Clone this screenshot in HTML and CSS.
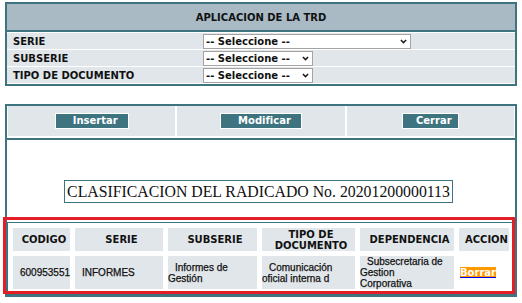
FILE: index.html
```html
<!DOCTYPE html>
<html lang="es">
<head>
<meta charset="utf-8">
<title>Aplicacion de la TRD</title>
<link rel="stylesheet" href="styles.css">
</head>
<body>
<div class="page">
  <section class="panel trd">
    <div class="trd-title">APLICACION DE LA TRD</div>
    <div class="trd-rows">
      <div class="trd-row">
        <span class="trd-label">SERIE</span>
        <span class="sel sel-wide"><select><option>-- Seleccione --</option></select><svg class="chev" viewBox="0 0 8 5"><path d="M1 0.8L4 3.8L7 0.8"/></svg></span>
      </div>
      <div class="trd-row">
        <span class="trd-label">SUBSERIE</span>
        <span class="sel sel-narrow"><select><option>-- Seleccione --</option></select><svg class="chev" viewBox="0 0 8 5"><path d="M1 0.8L4 3.8L7 0.8"/></svg></span>
      </div>
      <div class="trd-row">
        <span class="trd-label">TIPO DE DOCUMENTO</span>
        <span class="sel sel-narrow"><select><option>-- Seleccione --</option></select><svg class="chev" viewBox="0 0 8 5"><path d="M1 0.8L4 3.8L7 0.8"/></svg></span>
      </div>
    </div>
  </section>

  <section class="panel main">
    <div class="actions">
      <div class="action-cell"><button class="btn">Insertar</button></div>
      <div class="action-cell"><button class="btn">Modificar</button></div>
      <div class="action-cell"><button class="btn btn-close">Cerrar</button></div>
    </div>
    <div class="radicado-wrap">
      <div class="radicado">CLASIFICACION DEL RADICADO No. 20201200000113</div>
    </div>
    <div class="results-wrap">
      <table class="results">
        <colgroup>
          <col class="c-cod"><col class="c-serie"><col class="c-sub"><col class="c-tipo"><col class="c-dep"><col class="c-acc">
        </colgroup>
        <tr>
          <th>CODIGO</th><th>SERIE</th><th>SUBSERIE</th><th>TIPO DE DOCUMENTO</th><th>DEPENDENCIA</th><th>ACCION</th>
        </tr>
        <tr>
          <td>600953551</td>
          <td>INFORMES</td>
          <td>Informes de Gestión</td>
          <td>Comunicación oficial interna d</td>
          <td>Subsecretaria de Gestion<br>Corporativa</td>
          <td class="action"><a class="del" href="#"><span>Borrar</span></a></td>
        </tr>
      </table>
    </div>
  </section>
</div>
</body>
</html>
```
FILE: styles.css
```css
* { box-sizing: border-box; }
body {
  margin: 0;
  padding: 2px 0 0 5px;
  background: #fff;
  font-family: "DejaVu Sans", Verdana, sans-serif;
  color: #111;
}
.page { width: 512px; }
.panel { border: 2px solid #3d7480; }

/* top form */
.trd-title {
  height: 28px;
  background: #a9bac5;
  border-bottom: 2px solid #3d7480;
  display: flex;
  align-items: center;
  justify-content: center;
  font-size: 10px;
  font-weight: bold;
}
.trd-rows {
  display: flex;
  flex-direction: column;
  gap: 1px;
  padding: 1px 0;
}
.trd-row {
  height: 16px;
  background: #e1e6ea;
  display: flex;
  align-items: center;
}
.trd-label {
  width: 196px;
  padding-left: 6px;
  font-size: 10px;
  font-weight: bold;
}
.sel { position: relative; display: inline-flex; }
.sel select {
  -webkit-appearance: none;
  appearance: none;
  height: 15px;
  margin: 0;
  padding: 0 0 0 2px;
  border: 1px solid #a3a3a3;
  border-radius: 0;
  background: #fff;
  color: #111;
  font-family: "DejaVu Sans", Verdana, sans-serif;
  font-size: 10px;
  font-weight: bold;
  line-height: 13px;
}
.sel-wide select { width: 208px; }
.sel-narrow select { width: 110px; }
.chev {
  position: absolute;
  right: 4px;
  top: 5px;
  width: 7px;
  height: 5px;
  fill: none;
  stroke: #1a1a1a;
  stroke-width: 1.7;
  pointer-events: none;
}

/* main panel */
.main { margin-top: 18px; }
.actions {
  display: flex;
  gap: 2px;
  padding: 0 1px 2px;
  border-bottom: 2px solid #3d7480;
}
.action-cell {
  flex: 1;
  height: 30px;
  background: #e1e6ea;
  display: flex;
  align-items: center;
  justify-content: center;
}
.btn {
  height: 16px;
  margin: 0;
  padding: 0 10px 0 17px;
  border: 1px solid #fff;
  border-radius: 0;
  background: #3d7480;
  color: #fff;
  font-family: "DejaVu Sans", Verdana, sans-serif;
  font-size: 10px;
  font-weight: bold;
  line-height: 14px;
}
.btn-close { padding: 0 6px 0 13px; }

.radicado-wrap {
  display: flex;
  justify-content: center;
  padding: 40px 5px 19px 0;
}
.radicado {
  border: 1px solid #3d7480;
  padding: 0 2px;
  font-family: "Liberation Serif", "Times New Roman", serif;
  font-size: 15.8px;
  line-height: 21px;
  color: #111;
}

/* results */
.results-wrap { position: relative; }
.results-wrap::after {
  content: "";
  position: absolute;
  left: -4px;
  right: 0;
  top: -5px;
  bottom: 1px;
  border: 3px solid #e31e24;
  pointer-events: none;
}
.results {
  width: 508px;
  table-layout: fixed;
  border: 1px solid #3d7480;
  border-spacing: 5px;
}
.c-cod { width: 57px; }
.c-serie { width: 88px; }
.c-sub { width: 89px; }
.c-tipo { width: 93px; }
.c-dep { width: 94px; }
.c-acc { width: 50px; }
.results th {
  height: 23px;
  padding: 0 0 0 5px;
  background: #e1e6ea;
  font-family: "DejaVu Sans", Verdana, sans-serif;
  font-size: 10px;
  font-weight: bold;
  line-height: 11px;
  text-align: center;
  vertical-align: middle;
}
.results td {
  height: 33px;
  padding: 0;
  background: #e1e6ea;
  font-family: "Liberation Sans", Arial, sans-serif;
  font-size: 10px;
  line-height: 11px;
  text-indent: 7px;
  text-align: left;
  vertical-align: middle;
  color: #111;
  -webkit-text-stroke: 0.25px #111;
}
.results td.action {
  background: transparent;
  text-indent: 0;
  padding-left: 1px;
  -webkit-text-stroke: 0;
}
.del {
  color: #0000ee;
  background: #ff9900;
  font-family: "DejaVu Sans", Verdana, sans-serif;
  font-size: 10px;
  font-weight: bold;
  text-decoration: underline;
}
.del span { color: #fff; }
```
